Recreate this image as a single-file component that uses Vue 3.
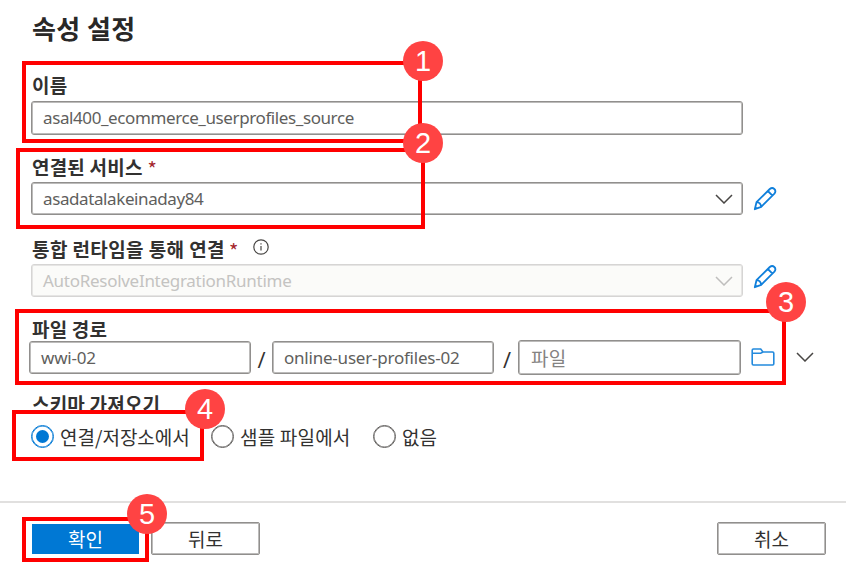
<script setup>
const callouts = [1, 2, 3, 4, 5]
const sources = [
  { id: 'linked', text: '연결/저장소에서', checked: true },
  { id: 'sample', text: '샘플 파일에서', checked: false },
  { id: 'none', text: '없음', checked: false },
]
</script>

<template>
  <main class="panel">
    <h1 class="title"><span>속성 설정</span></h1>

    <section class="field">
      <div class="label">이름</div>
      <div class="row">
        <div class="input name"><span class="t-name">asal400_ecommerce_userprofiles_source</span></div>
      </div>
    </section>

    <section class="field service">
      <div class="label">연결된 서비스<span class="req">*</span></div>
      <div class="row">
        <div class="input select">
          <span class="t-service">asadatalakeinaday84</span>
          <svg class="chevron" viewBox="0 0 18 10"><path d="M1 1l8 8 8-8" /></svg>
        </div>
        <svg class="pencil" viewBox="0 0 24 24"><path d="M1.8 22.2l1.7-7L16.8 2c3.2-2.6 7.3 1.1 4.6 4.6L8.2 19.9zM14.8 4l4.7 4.7M3.5 15.2c2.8.2 4.4 1.9 4.7 4.7M2.2 20.2l1.8 1.5" /></svg>
      </div>
    </section>

    <section class="field runtime">
      <div class="label wide">통합 런타임을 통해 연결<span class="req">*</span>
        <svg class="info" viewBox="0 0 16 16"><circle cx="8" cy="8" r="7.2" /><path d="M8 7v4.5M8 4.2v1.4" /></svg>
      </div>
      <div class="row">
        <div class="input select disabled">
          <span class="t-runtime">AutoResolveIntegrationRuntime</span>
          <svg class="chevron" viewBox="0 0 18 10"><path d="M1 1l8 8 8-8" /></svg>
        </div>
        <svg class="pencil raised" viewBox="0 0 24 24"><path d="M1.8 22.2l1.7-7L16.8 2c3.2-2.6 7.3 1.1 4.6 4.6L8.2 19.9zM14.8 4l4.7 4.7M3.5 15.2c2.8.2 4.4 1.9 4.7 4.7M2.2 20.2l1.8 1.5" /></svg>
      </div>
    </section>

    <section class="field path">
      <div class="label">파일 경로</div>
      <div class="row path-row">
        <div class="input part"><span class="t-container">wwi-02</span></div>
        <span class="slash">/</span>
        <div class="input part"><span class="t-folder">online-user-profiles-02</span></div>
        <span class="slash second">/</span>
        <div class="input part file"><span class="placeholder">파일</span></div>
        <svg class="folder" viewBox="0 0 24 18"><path d="M1.2 2.2q0-1.2 1.2-1.2h7.3l2.3 3h9.6q1.2 0 1.2 1.2v10.6q0 1.2-1.2 1.2H2.4q-1.2 0-1.2-1.2zM1.2 5.3h8.5L12 4" /></svg>
        <svg class="chevron expand" viewBox="0 0 18 10"><path d="M1 1l8 8 8-8" /></svg>
      </div>
    </section>

    <section class="schema">
      <div class="label covered">스키마 가져오기</div>
      <div class="radios">
        <label v-for="s in sources" :key="s.id" class="radio" :class="[s.id, { checked: s.checked }]">
          <i class="dot"></i><span>{{ s.text }}</span>
        </label>
      </div>
    </section>

    <footer class="footer">
      <button class="btn primary">확인</button>
      <button class="btn back">뒤로</button>
      <button class="btn cancel">취소</button>
    </footer>

    <template v-for="n in callouts" :key="n">
      <div class="frame" :class="'frame-' + n"></div>
    </template>
    <template v-for="n in callouts" :key="'b' + n">
      <div class="badge" :class="'badge-' + n">{{ n }}</div>
    </template>
  </main>
</template>

<style>
body { margin: 0; background: #fff; }
</style>

<style scoped>
* { box-sizing: border-box; }
.panel {
  position: relative;
  width: 846px;
  height: 574px;
  overflow: hidden;
  background: #fff;
  color: #323130;
  font-family: "Noto Sans", "Noto Sans CJK KR", sans-serif;
  white-space: nowrap;
}
.title {
  margin: 0;
  padding: 9px 0 0 32px;
  height: 69px;
  font: 700 26px/38px "Noto Sans CJK KR", sans-serif;
  letter-spacing: 0.4px;
  color: #292827;
}
.field { height: 82px; padding-left: 31px; }
.runtime { height: 80px; }
.path { height: 72px; padding-left: 29px; }
.label {
  display: flex;
  align-items: center;
  height: 32px;
  padding-left: 1px;
  font: 700 19px/32px "Noto Sans CJK KR", sans-serif;
  letter-spacing: 0.2px;
}
.service .label, .runtime .label { height: 31px; }
.label.wide { letter-spacing: 0.4px; }
.req { color: #a4262c; margin-left: 5px; font-weight: 400; font-size: 20px; padding-top: 4px; }
.runtime .req { margin-left: 4px; }
.info { width: 16px; height: 16px; margin-left: 14px; margin-top: -3px; fill: none; stroke: #484644; stroke-width: 1.2; }
.row { display: flex; align-items: center; }
.input {
  display: flex;
  align-items: center;
  justify-content: space-between;
  width: 712px;
  height: 33px;
  padding: 0 9px 0 11px;
  border: 1px solid #918f8d;
  box-shadow: inset 0 0 0 1px #bcbbba;
  border-radius: 3px;
  color: #605e5c;
  line-height: 29px;
  font-size: 17px;
}
.name { height: 34px; }
.name span { margin-top: -1px; }
.disabled { border-color: #d6d5d4; box-shadow: inset 0 0 0 1px #e6e5e4; background: #fbfbf9; color: #c4c3c1; }
.chevron { width: 18px; height: 10px; fill: none; stroke: #484644; stroke-width: 1.5; }
.disabled .chevron { stroke: #bfbebd; }
.t-name { letter-spacing: -0.4px; }
.t-service { letter-spacing: -0.4px; }
.t-runtime { letter-spacing: -0.28px; }
.t-container { letter-spacing: -0.2px; }
.t-folder { letter-spacing: -0.22px; }
.pencil { width: 24px; height: 24px; margin-left: 10px; fill: none; stroke: #0f7fdb; stroke-width: 1.8; stroke-linejoin: round; }
.raised { margin-top: -7px; }
.path .label { padding-left: 3px; height: 31px; }
.path-row { height: 35px; margin-top: -4px; }
.part { width: 222px; flex: none; height: 33px; }
.file { height: 35px; width: 223px; }
.slash { width: 21px; padding-top: 2px; text-align: center; font: 22px/30px "Open Sans", sans-serif; }
.second { width: 24px; padding-left: 2px; }
.placeholder { font-family: "Noto Sans CJK KR", sans-serif; font-size: 19px; color: #858382; letter-spacing: 0.3px; margin-left: 1px; }
.folder { width: 24px; height: 18px; margin-left: 10px; margin-top: -2px; fill: none; stroke: #238add; stroke-width: 1.6; }
.expand { margin-left: 21px; margin-top: -2px; }
.schema { height: 116px; padding-left: 31px; padding-top: 3px; }
.radios { display: flex; height: 32px; align-items: center; font: 19px/30px "Noto Sans CJK KR", sans-serif; }
.radio { display: flex; align-items: center; gap: 6px; }
.radio span { margin-top: 1px; }
.linked { width: 180px; }
.sample { width: 162px; letter-spacing: 0.2px; }
.dot { width: 23px; height: 23px; border: 1.5px solid #605e5c; border-radius: 50%; display: grid; place-items: center; box-shadow: inset 0 0 0 0.5px #706e6c; }
.checked .dot { border-color: #0078d4; box-shadow: inset 0 0 0 0.5px #0078d4; }
.checked .dot::after { content: ""; width: 13px; height: 13px; border-radius: 50%; background: #0078d4; }
.footer { display: flex; align-items: flex-start; height: 73px; border-top: 2px solid #e1e0df; padding: 19px 20px 0 32px; }
.btn { width: 109px; height: 33px; padding: 0; border: 1px solid #918f8d; box-shadow: inset 0 0 0 1px #bcbbba; border-radius: 2px; background: #fff; color: #323130; font: 19px/28px "Noto Sans CJK KR", sans-serif; }
.primary { width: 107px; height: 30px; margin-top: 2px; border: 0; box-shadow: none; background: #0078d4; color: #fff; border-radius: 0; }
.back { margin-left: 12px; }
.cancel { margin-left: auto; }
.frame { position: absolute; border: 4px solid #f00; }
.frame-1 { left: 22px; top: 61px; width: 400px; height: 82px; }
.frame-2 { left: 16px; top: 148px; width: 409px; height: 81px; }
.frame-3 { left: 15px; top: 309px; width: 771px; height: 76px; }
.frame-4 { left: 12px; top: 410px; width: 192px; height: 51px; }
.frame-5 { left: 22px; top: 517px; width: 127px; height: 45px; }
.badge { position: absolute; width: 40px; height: 40px; border-radius: 50%; background: #ff4343; color: #fff; font: 29px/41px "Liberation Sans", sans-serif; text-align: center; }
.badge-1 { left: 403px; top: 41px; }
.badge-2 { left: 403px; top: 123px; }
.badge-3 { left: 766px; top: 282px; }
.badge-4 { left: 185px; top: 389px; }
.badge-5 { left: 127px; top: 494px; }
</style>
